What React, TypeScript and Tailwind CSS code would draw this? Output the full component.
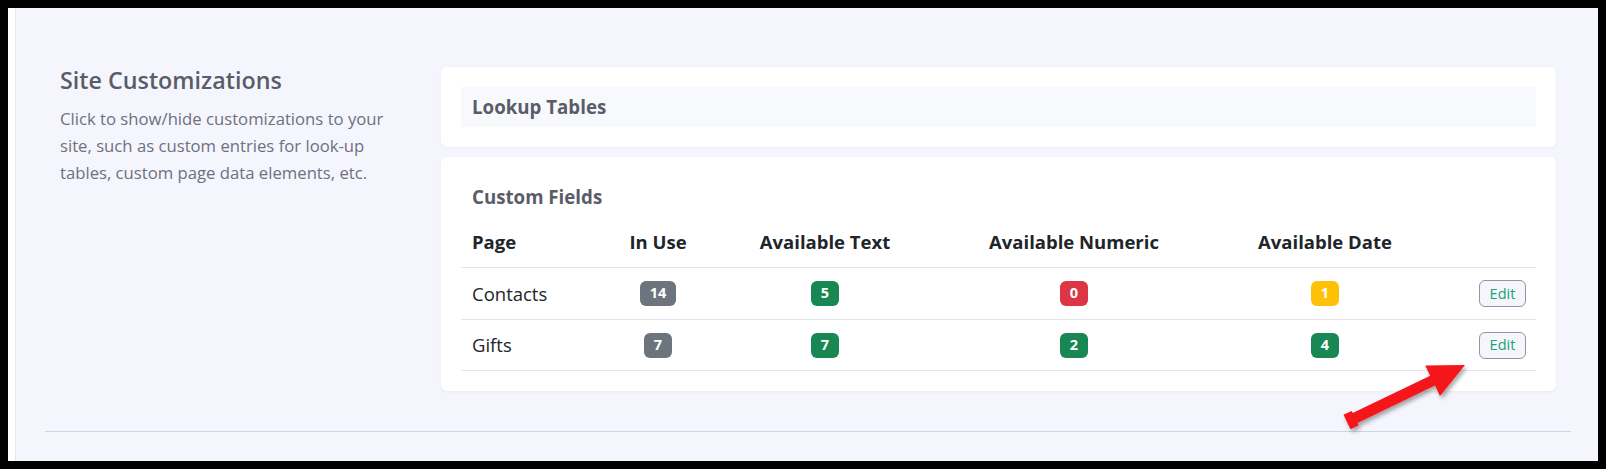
import React from 'react'

type Tone = 'gray' | 'green' | 'red' | 'yellow'

type Row = {
    page: string
    inUse: number
    text: number
    numeric: number
    date: number
}

const rows: Row[] = [
    { page: 'Contacts', inUse: 14, text: 5, numeric: 0, date: 1 },
    { page: 'Gifts', inUse: 7, text: 7, numeric: 2, date: 4 },
]

const toneClass: Record<Tone, string> = {
    gray: 'bg-[#6c757d]',
    green: 'bg-[#198754]',
    red: 'bg-[#dc3545]',
    yellow: 'bg-[#ffc107]',
}

function toneFor(n: number): Tone {
    if (n === 0) return 'red'
    if (n === 1) return 'yellow'
    return 'green'
}

function Badge(props: { value: number; tone: Tone }) {
    return (
        <span
            className={`inline-flex h-[25px] min-w-[28px] items-center justify-center rounded-[6px] px-[10px] text-[14.5px] font-bold leading-none text-white ${toneClass[props.tone]}`}
        >
            {props.value}
        </span>
    )
}

const gridCols = 'grid grid-cols-[119px_156px_178px_320px_182px_1fr]'

function CustomFieldsTable() {
    return (
        <div>
            <div className={`${gridCols} h-[51px] items-center border-b border-[#e3e5ea] text-[18.5px] font-bold text-[#212529]`}>
                <div className="px-[11px]">Page</div>
                <div className="text-center">In Use</div>
                <div className="text-center">Available Text</div>
                <div className="text-center">Available Numeric</div>
                <div className="text-center">Available Date</div>
                <div />
            </div>
            {rows.map((r, i) => (
                <div
                    key={r.page}
                    className={`${gridCols} ${i === 0 ? 'h-[52px]' : 'h-[51px]'} items-center border-b border-[#e3e5ea] text-[18.5px] text-[#212529]`}
                >
                    <div className="px-[11px]">{r.page}</div>
                    <div className="flex justify-center">
                        <Badge value={r.inUse} tone="gray" />
                    </div>
                    <div className="flex justify-center">
                        <Badge value={r.text} tone={toneFor(r.text)} />
                    </div>
                    <div className="flex justify-center">
                        <Badge value={r.numeric} tone={toneFor(r.numeric)} />
                    </div>
                    <div className="flex justify-center">
                        <Badge value={r.date} tone={toneFor(r.date)} />
                    </div>
                    <div className="flex justify-end pr-[10px]">
                        <button className="h-[27px] w-[47px] rounded-[6px] border border-[#8e96a8] bg-[#f5f6fc] text-[14.5px] text-[#1aa179]">
                            Edit
                        </button>
                    </div>
                </div>
            ))}
        </div>
    )
}

// red annotation arrow pointing at the second Edit button
function Arrow() {
    return (
        <svg
            className="pointer-events-none absolute left-[1304px] top-[332px]"
            width={170}
            height={115}
            viewBox="1320 340 170 115"
        >
            <defs>
                <filter id="arrow-shadow" x="-20%" y="-20%" width="140%" height="150%">
                    <feDropShadow dx="2" dy="3" stdDeviation="2" floodColor="#000" floodOpacity="0.35" />
                </filter>
            </defs>
            <polygon
                filter="url(#arrow-shadow)"
                fill="#f5141c"
                points="1343.5,414.8 1351.6,410.9 1352.7,413.1 1430.2,375.7 1425.2,365.4 1465,365 1440,396 1435,385.6 1357.5,423 1358.6,425.3 1350.5,429.2"
            />
        </svg>
    )
}

export default function App() {
    return (
        <div className="h-[469px] w-[1606px] bg-black p-2 font-['Open_Sans',sans-serif] antialiased">
            <div className="flex h-full">
                <div className="w-[7px] bg-white" />
                <div className="relative flex-1 border-l border-[#e3e6f0] bg-[#f5f6fd] pl-[29px] pr-[27px] pt-[59px]">
                    <div className="flex px-[15px]">
                        <div className="w-[340px] shrink-0">
                            <h4 className="text-[23.3px] font-semibold leading-[1.2] text-[#5a5c69]">Site Customizations</h4>
                            <p className="mt-[10px] text-[16.7px] leading-[27px] text-[#6e707e]">
                                Click to show/hide customizations to your site, such as custom entries for look-up tables, custom page data elements, etc.
                            </p>
                        </div>
                        <div className="ml-[41px] flex flex-1 flex-col gap-[10px]">
                            <div className="rounded-[6px] bg-white p-[20px] shadow-[0_1px_3px_rgba(30,40,90,0.06)]">
                                <div className="flex h-[40px] items-center bg-[#f8f9fd] px-[11px] text-[18.7px] font-bold text-[#5a5c69]">
                                    Lookup Tables
                                </div>
                            </div>
                            <div className="rounded-[6px] bg-white p-[20px] shadow-[0_1px_3px_rgba(30,40,90,0.06)]">
                                <div className="flex h-[40px] items-center px-[11px] text-[18.7px] font-bold text-[#5a5c69]">
                                    Custom Fields
                                </div>
                                <CustomFieldsTable />
                            </div>
                        </div>
                    </div>
                    <div className="mt-[40px] border-t border-[#d1d3e2]" />
                    <Arrow />
                </div>
            </div>
        </div>
    )
}
